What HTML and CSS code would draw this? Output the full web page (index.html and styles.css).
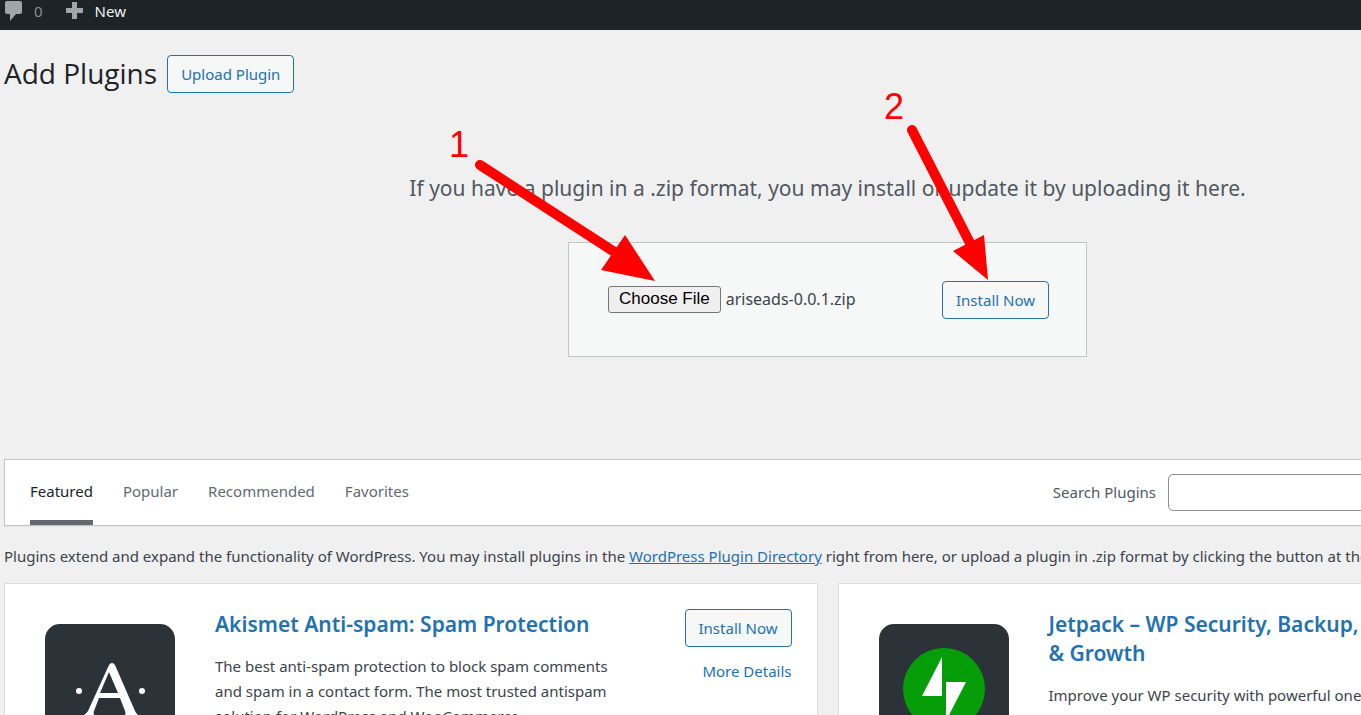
FILE: index.html
```html
<!DOCTYPE html>
<html lang="en">
<head>
<meta charset="utf-8">
<title>Add Plugins</title>
<link rel="stylesheet" href="styles.css">
</head>
<body>
<header class="adminbar">
  <a class="adminbar-item adminbar-comments" href="#">
    <svg class="adminbar-icon" viewBox="0 0 18 22" aria-hidden="true"><path d="M2 1h13q2 0 2 2v9q0 2-2 2h-4l-6 7v-7H2q-2 0-2-2V3q0-2 2-2z"/></svg>
    <span>0</span>
  </a>
  <a class="adminbar-item" href="#">
    <svg class="adminbar-icon" viewBox="0 0 18 22" aria-hidden="true"><path d="M6 2h5v6h6v5h-6v6H6v-6H0V8h6z"/></svg>
    <span>New</span>
  </a>
</header>
<main class="content">
  <div class="heading">
    <h1 class="title">Add Plugins</h1>
    <button class="button" type="button">Upload Plugin</button>
  </div>
  <section class="upload">
    <p class="upload-help">If you have a plugin in a .zip format, you may install or update it by uploading it here.</p>
    <form class="upload-form">
      <div class="file">
        <button class="file-button" type="button">Choose File</button>
        <span class="file-name">ariseads-0.0.1.zip</span>
      </div>
      <button class="button" type="button">Install Now</button>
    </form>
    <svg class="notes" viewBox="0 0 600 220" aria-hidden="true">
      <text x="45" y="77">1</text>
      <text x="480" y="39">2</text>
      <path class="shaft" d="M76 85L212 173M508 50L567 165"/>
      <path d="M221 155L251 201L197 190zM580 155L584 200L549 171z"/>
    </svg>
  </section>
  <nav class="filter">
    <ul class="tabs">
      <li><a class="tab tab-current" href="#">Featured</a></li>
      <li><a class="tab" href="#">Popular</a></li>
      <li><a class="tab" href="#">Recommended</a></li>
      <li><a class="tab" href="#">Favorites</a></li>
    </ul>
    <form class="search">
      <label for="search">Search Plugins</label>
      <input class="search-input" id="search" type="search">
    </form>
  </nav>
  <p class="intro">Plugins extend and expand the functionality of WordPress. You may install plugins in the <a href="#">WordPress Plugin Directory</a> right from here, or upload a plugin in .zip format by clicking the button at the top of this page.</p>
  <div class="cards">
    <article class="card">
      <svg class="card-icon" viewBox="0 0 130 130" aria-hidden="true">
        <rect width="130" height="130" rx="15" fill="#2c3338"/>
        <path fill="#fff" d="M64 41q3-4 6 0l20 46q2 5 9 6v4H76v-4q6-1 4-6l-5-13H54l-5 13q-2 5 5 6v4H33v-4q7-1 10-6zM64 48L55 69h18z"/>
        <circle cx="34" cy="67" r="3" fill="#fff"/><circle cx="97" cy="67" r="3" fill="#fff"/>
      </svg>
      <div class="card-text">
        <h3 class="card-title"><a href="#">Akismet Anti-spam: Spam Protection</a></h3>
        <p class="card-desc">The best anti-spam protection to block spam comments and spam in a contact form. The most trusted antispam solution for WordPress and WooCommerce.</p>
      </div>
      <div class="card-actions">
        <button class="button" type="button">Install Now</button>
        <a href="#">More Details</a>
      </div>
    </article>
    <article class="card">
      <svg class="card-icon" viewBox="0 0 130 130" aria-hidden="true">
        <rect width="130" height="130" rx="15" fill="#2c3338"/>
        <circle cx="65" cy="65" r="41" fill="#069e08"/>
        <path fill="#fff" d="M63 33v39H43zM67 58h20L67 97z"/>
      </svg>
      <div class="card-text">
        <h3 class="card-title"><a href="#">Jetpack – WP Security, Backup, Speed, &amp;&nbsp;Growth</a></h3>
        <p class="card-desc">Improve your WP security with powerful one-click tools like backup, WAF, and malware scan.</p>
      </div>
      <div class="card-actions">
        <button class="button" type="button">Install Now</button>
        <a href="#">More Details</a>
      </div>
    </article>
  </div>
</main>
</body>
</html>
```
FILE: styles.css
```css
* { box-sizing: border-box; }
html, body { height: 100%; }
body {
  margin: 0;
  overflow: hidden;
  background: #f0f0f1;
  color: #3c434a;
  font: 15px/25px "Noto Sans", "Open Sans", sans-serif;
}
h1, h3, p, ul { margin: 0; padding: 0; }
a { color: #2271b1; }
.adminbar {
  display: flex;
  gap: 23px;
  height: 30px;
  padding-left: 5px;
  background: #1d2327;
}
.adminbar-item {
  display: flex;
  gap: 11px;
  height: 22px;
  align-items: center;
  color: #f0f0f1;
  text-decoration: none;
}
.adminbar-comments { color: #8c8f94; }
.adminbar-icon { width: 18px; height: 22px; fill: #a0a5aa; }
.content { margin: 0 -290px 0 4px; }
.heading { display: flex; align-items: center; gap: 10px; padding-top: 25px; }
.title { color: #1d2327; font: 400 28px/36px "Open Sans", "Noto Sans", sans-serif; padding-bottom: 2px; }
.button {
  height: 38px;
  padding: 0 13px;
  border: 1px solid #2271b1;
  border-radius: 4px;
  background: #f6f7f7;
  color: #2271b1;
  font: inherit;
  white-space: nowrap;
}
.upload { position: relative; padding: 77px 0 102px; }
.upload-help { color: #50575e; font-size: 21px; line-height: 36px; text-align: center; }
.upload-form {
  display: flex;
  align-items: center;
  justify-content: space-between;
  width: 519px;
  margin: 36px auto 0;
  padding: 38px 37px 37px 39px;
  border: 1px solid #c3c4c7;
  background: #f6f7f7;
}
.file { display: flex; align-items: center; gap: 5px; padding-bottom: 2px; font-size: 16px; }
.file-button {
  height: 27px;
  padding: 0 10px;
  border: 1px solid #767676;
  border-radius: 3px;
  background: #efefef;
  color: #000;
  font: 17px "Liberation Sans", Arial, sans-serif;
}
.notes {
  position: absolute;
  top: -13px;
  left: calc(50% - 424px);
  width: 600px;
  height: 220px;
  fill: #f00;
  font: 36px "Liberation Sans", Arial, sans-serif;
}
.shaft { fill: none; stroke: #f00; stroke-width: 10px; stroke-linecap: round; }
.filter {
  display: flex;
  justify-content: space-between;
  height: 67px;
  padding: 0 25px;
  border: 1px solid #c3c4c7;
  background: #fff;
  box-shadow: 0 1px 1px rgba(0, 0, 0, .04);
}
.tabs { display: flex; gap: 30px; list-style: none; }
.tab {
  display: block;
  height: 65px;
  padding-top: 19px;
  color: #646970;
  text-decoration: none;
}
.tab-current { border-bottom: 5px solid #646970; color: #1d2327; }
.search { display: flex; align-items: center; gap: 12px; color: #50575e; }
.search-input {
  width: 457px;
  height: 37px;
  border: 1px solid #8c8f94;
  border-radius: 5px;
  background: #fff;
  font: inherit;
}
.intro { padding: 18px 0 14px; white-space: nowrap; }
.cards { display: grid; grid-template-columns: 1fr 1fr; gap: 20px; }
.card {
  display: flex;
  align-items: flex-start;
  padding: 25px;
  border: 1px solid #dcdcde;
  background: #fff;
}
.card-icon { flex: none; width: 130px; height: 130px; margin: 15px 40px 0 15px; }
.card-text { flex: 1; padding: 1px 52px 0 0; color: #3c434a; }
.card-title { margin-bottom: 15px; font-size: 21px; line-height: 29px; font-weight: 600; }
.card-title a, .card-actions a { text-decoration: none; }
.card-desc { max-width: 416px; }
.card-actions { display: flex; flex-direction: column; align-items: flex-end; gap: 12px; }
```
